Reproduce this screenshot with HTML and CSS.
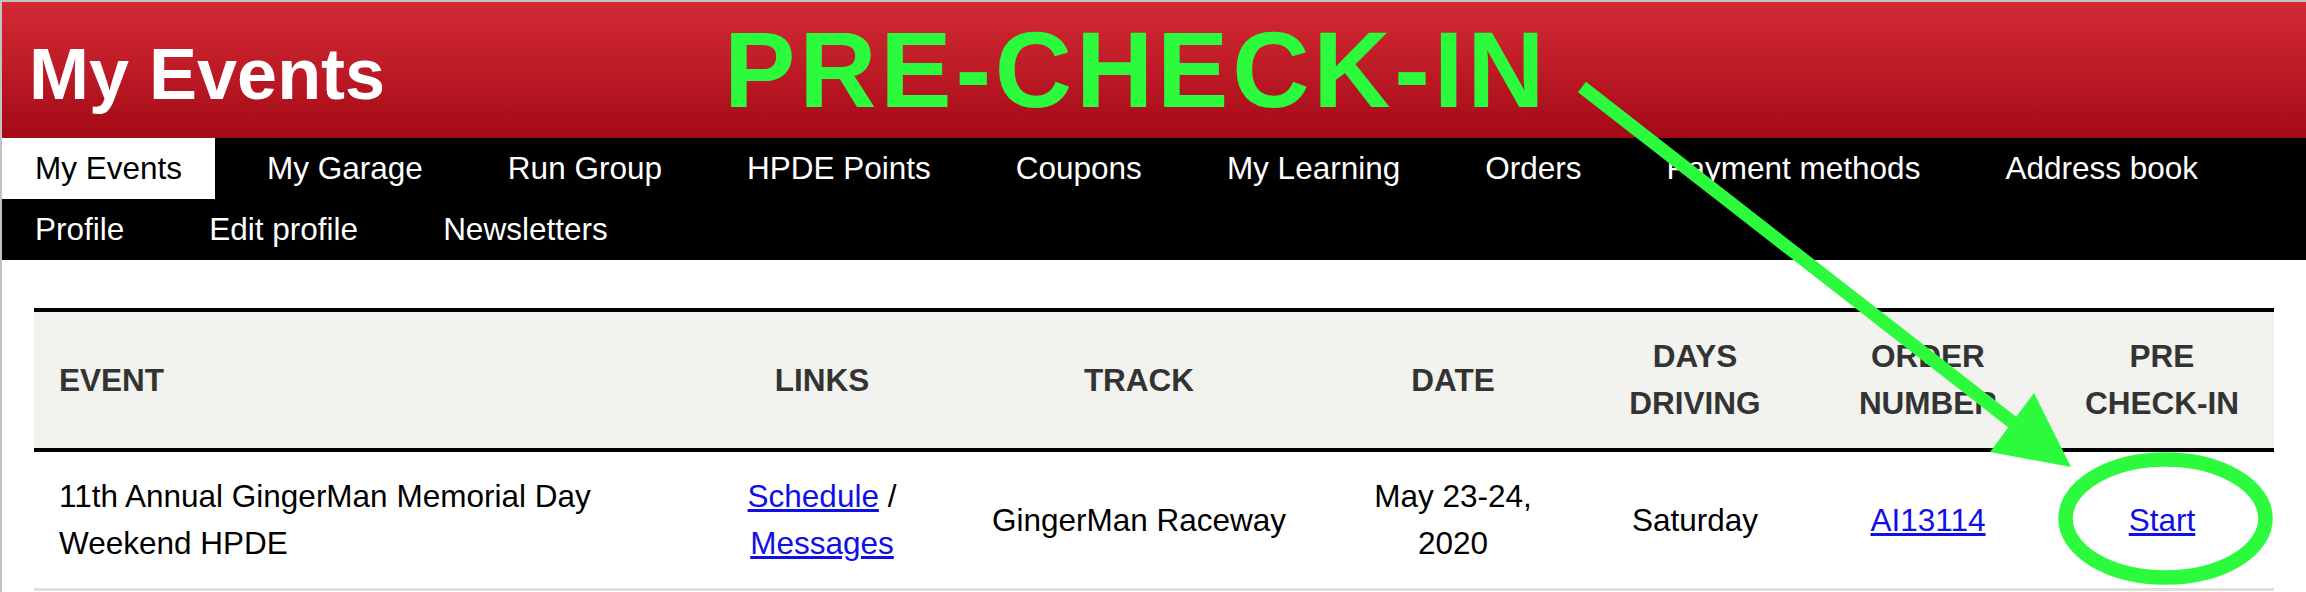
FILE: index.html
```html
<!DOCTYPE html>
<html lang="en">
<head>
<meta charset="utf-8">
<title>My Events</title>
<link rel="stylesheet" href="styles.css">
</head>
<body>
<div class="page">
  <header class="masthead">
    <h1 class="title">My Events</h1>
  </header>
  <nav class="tabs">
    <ul class="tab-list">
      <li class="tab active"><a href="#">My Events</a></li>
      <li class="tab"><a href="#">My Garage</a></li>
      <li class="tab"><a href="#">Run Group</a></li>
      <li class="tab"><a href="#">HPDE Points</a></li>
      <li class="tab"><a href="#">Coupons</a></li>
      <li class="tab"><a href="#">My Learning</a></li>
      <li class="tab"><a href="#">Orders</a></li>
      <li class="tab"><a href="#">Payment methods</a></li>
      <li class="tab"><a href="#">Address book</a></li>
      <li class="tab"><a href="#">Profile</a></li>
      <li class="tab"><a href="#">Edit profile</a></li>
      <li class="tab"><a href="#">Newsletters</a></li>
    </ul>
  </nav>
  <main class="content">
    <table class="events">
      <colgroup>
        <col class="col-event">
        <col class="col-links">
        <col class="col-track">
        <col class="col-date">
        <col class="col-days">
        <col class="col-order">
        <col class="col-pre">
      </colgroup>
      <thead>
        <tr>
          <th class="cell-left">EVENT</th>
          <th>LINKS</th>
          <th>TRACK</th>
          <th>DATE</th>
          <th>DAYS DRIVING</th>
          <th>ORDER NUMBER</th>
          <th>PRE CHECK-IN</th>
        </tr>
      </thead>
      <tbody>
        <tr>
          <td class="cell-left">11th Annual GingerMan Memorial Day Weekend HPDE</td>
          <td><a href="#">Schedule</a> / <a href="#">Messages</a></td>
          <td>GingerMan Raceway</td>
          <td>May 23-24, 2020</td>
          <td>Saturday</td>
          <td><a href="#">AI13114</a></td>
          <td><a href="#">Start</a></td>
        </tr>
      </tbody>
    </table>
  </main>
</div>
<div class="annot-title">PRE-CHECK-IN</div>
<svg class="annot" width="2306" height="592" viewBox="0 0 2306 592" xmlns="http://www.w3.org/2000/svg">
  <line x1="1582" y1="87" x2="2016" y2="425" stroke="#2cfa3c" stroke-width="13"/>
  <polygon points="2071,467 2034,393 1990,452" fill="#2cfa3c"/>
  <ellipse cx="2165.5" cy="518.5" rx="100" ry="59" fill="none" stroke="#2cfa3c" stroke-width="14.5"/>
</svg>
</body>
</html>
```

FILE: styles.css
```css
html, body {
  margin: 0;
  padding: 0;
}

body {
  position: relative;
  width: 2306px;
  height: 592px;
  overflow: hidden;
  background: #ffffff;
  font-family: "Liberation Sans", Arial, Helvetica, sans-serif;
  color: #000000;
}

.page {
  border-top: 2px solid #c3c3c3;
  border-left: 2px solid #c3c3c3;
  min-height: 590px;
}

.masthead {
  height: 136px;
  background: linear-gradient(to bottom, #d32a34 0%, #bd1b26 50%, #a30916 100%);
  padding: 36px 0 0 27px;
  box-sizing: border-box;
}

.title {
  margin: 0;
  font-size: 72px;
  line-height: 72px;
  font-weight: bold;
  color: #ffffff;
}

.tabs {
  background: #000000;
}

.tab-list {
  list-style: none;
  margin: 0;
  padding: 0;
  display: flex;
  flex-wrap: wrap;
  column-gap: 19px;
}

.tab {
  font-size: 31.5px;
  line-height: 61px;
  padding: 0 33px;
}

.tab a {
  color: #ffffff;
  text-decoration: none;
}

.tab.active {
  background: #ffffff;
}

.tab.active a {
  color: #000000;
}

.content {
  padding: 48px 32px 0 32px;
}

.events {
  width: 2240px;
  table-layout: fixed;
  border-collapse: separate;
  border-spacing: 0;
  font-size: 31.5px;
  line-height: 47px;
}

.col-event { width: 654px; }
.col-links { width: 268px; }
.col-track { width: 366px; }
.col-date { width: 262px; }
.col-days { width: 222px; }
.col-order { width: 244px; }
.col-pre { width: 224px; }

.events th {
  background: #f2f2ee;
  color: #333333;
  font-weight: bold;
  text-align: center;
  vertical-align: middle;
  padding: 21px 25px;
  border-top: 4px solid #000000;
  border-bottom: 4px solid #000000;
}

.events td {
  text-align: center;
  vertical-align: middle;
  padding: 21px 25px;
  border-bottom: 3px solid #e0e0da;
  color: #000000;
}

.events th.cell-left,
.events td.cell-left {
  text-align: left;
}

.events a {
  color: #1010e6;
  text-decoration: underline;
}

.annot-title {
  position: absolute;
  left: 724px;
  top: 17px;
  font-size: 107px;
  line-height: 107px;
  font-weight: bold;
  letter-spacing: 3.8px;
  color: #2cfa3c;
  white-space: nowrap;
}

.annot {
  position: absolute;
  left: 0;
  top: 0;
  pointer-events: none;
}
```
